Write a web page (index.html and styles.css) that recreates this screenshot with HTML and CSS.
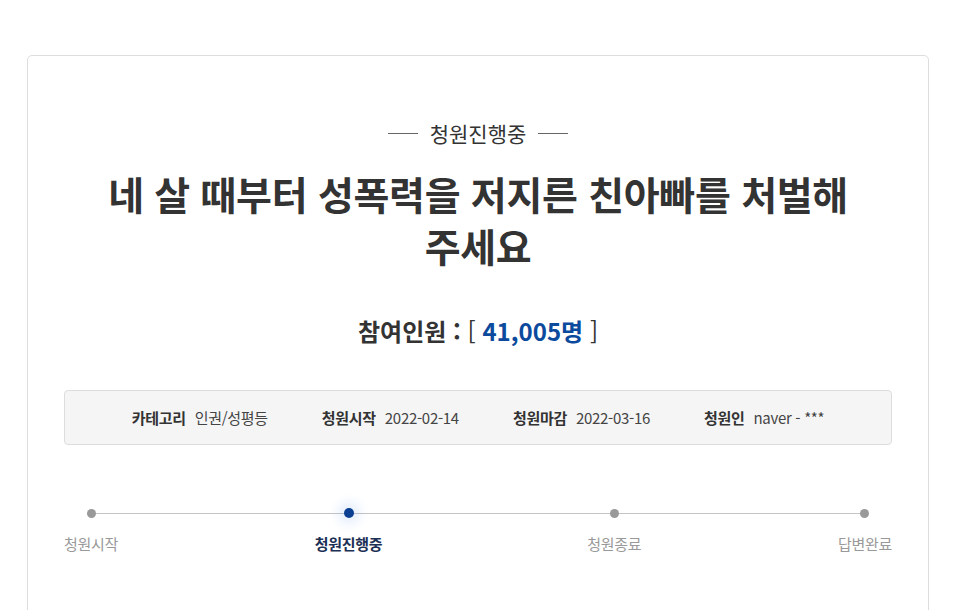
FILE: index.html
```html
<!DOCTYPE html>
<html lang="ko">
<head>
<meta charset="utf-8">
<link rel="stylesheet" href="styles.css">
</head>
<body>
<div class="card">
  <div class="status"><span class="rule"></span><span class="status-text">청원진행중</span><span class="rule"></span></div>
  <h1 class="title">네 살 때부터 성폭력을 저지른 친아빠를 처벌해 주세요</h1>
  <p class="count">참여인원 : <span class="bracket">[</span> <span class="num">41,005명</span> <span class="bracket">]</span></p>
  <ul class="info">
    <li><strong>카테고리</strong><span>인권/성평등</span></li>
    <li><strong>청원시작</strong><span>2022-02-14</span></li>
    <li><strong>청원마감</strong><span>2022-03-16</span></li>
    <li><strong>청원인</strong><span>naver - ***</span></li>
  </ul>
  <ol class="steps">
    <li class="step"><span class="dot"></span><span class="label">청원시작</span></li>
    <li class="step active"><span class="dot"></span><span class="label">청원진행중</span></li>
    <li class="step"><span class="dot"></span><span class="label">청원종료</span></li>
    <li class="step"><span class="dot"></span><span class="label">답변완료</span></li>
  </ol>
</div>
</body>
</html>
```

FILE: styles.css
```css
* { box-sizing: border-box; }
html, body { margin: 0; padding: 0; background: #fff; }
body {
  font-family: "Noto Sans CJK KR", "Noto Sans", sans-serif;
  color: #333;
  width: 959px;
  height: 610px;
  overflow: hidden;
}
.card {
  margin: 55px 0 0 27px;
  width: 902px;
  min-height: 700px;
  border: 1px solid #ddd;
  border-radius: 5px;
  padding: 65px 36px 60px;
}
.status {
  display: flex;
  justify-content: center;
  align-items: center;
  gap: 12px;
  font-size: 21px;
  line-height: 24px;
  color: #333;
}
.rule {
  width: 30px;
  height: 1px;
  background: #666;
}
.title {
  margin: 22px 0 0;
  text-align: center;
  font-size: 39px;
  line-height: 52px;
  font-weight: 700;
  letter-spacing: -0.3px;
  word-break: keep-all;
  color: #333;
}
.count {
  margin: 44px 0 0;
  text-align: center;
  font-size: 24px;
  line-height: 32px;
  font-weight: 700;
  color: #333;
}
.count .bracket { font-weight: 400; }
.count .num { color: #0b4a9c; }
.info {
  list-style: none;
  margin: 43px 0 0;
  padding: 0;
  height: 55px;
  background: #f5f5f5;
  border: 1px solid #ddd;
  border-radius: 4px;
  display: flex;
  justify-content: center;
  align-items: center;
  gap: 54px;
  font-size: 15px;
  letter-spacing: -0.3px;
  color: #444;
}
.info li { display: flex; gap: 9px; align-items: center; }
.info strong { font-weight: 700; color: #333; }
.steps {
  list-style: none;
  margin: 57px 0 0;
  padding: 0;
  display: flex;
  justify-content: space-between;
  position: relative;
}
.steps::before {
  content: "";
  position: absolute;
  left: 27px;
  right: 28px;
  top: 11px;
  height: 1px;
  background: #c4c4c4;
}
.step {
  display: flex;
  flex-direction: column;
  align-items: center;
  gap: 10px;
  position: relative;
}
.dot {
  width: 22px;
  height: 22px;
  display: flex;
  align-items: center;
  justify-content: center;
}
.dot::after {
  content: "";
  width: 9px;
  height: 9px;
  border-radius: 50%;
  background: #999;
}
.step.active { margin-right: 8px; }
.step.active .dot {
  border-radius: 50%;
  background: radial-gradient(circle, rgba(60,130,230,0.14) 0%, rgba(60,130,230,0.08) 55%, rgba(60,130,230,0) 100%);
  box-shadow: 0 0 6px 4px rgba(60,130,230,0.06);
}
.step.active .dot::after { background: #0a3f92; width: 10px; height: 10px; }
.label {
  font-size: 15px;
  line-height: 20px;
  letter-spacing: -0.3px;
  color: #999;
}
.step.active .label { color: #1c2f55; font-weight: 700; }
```
